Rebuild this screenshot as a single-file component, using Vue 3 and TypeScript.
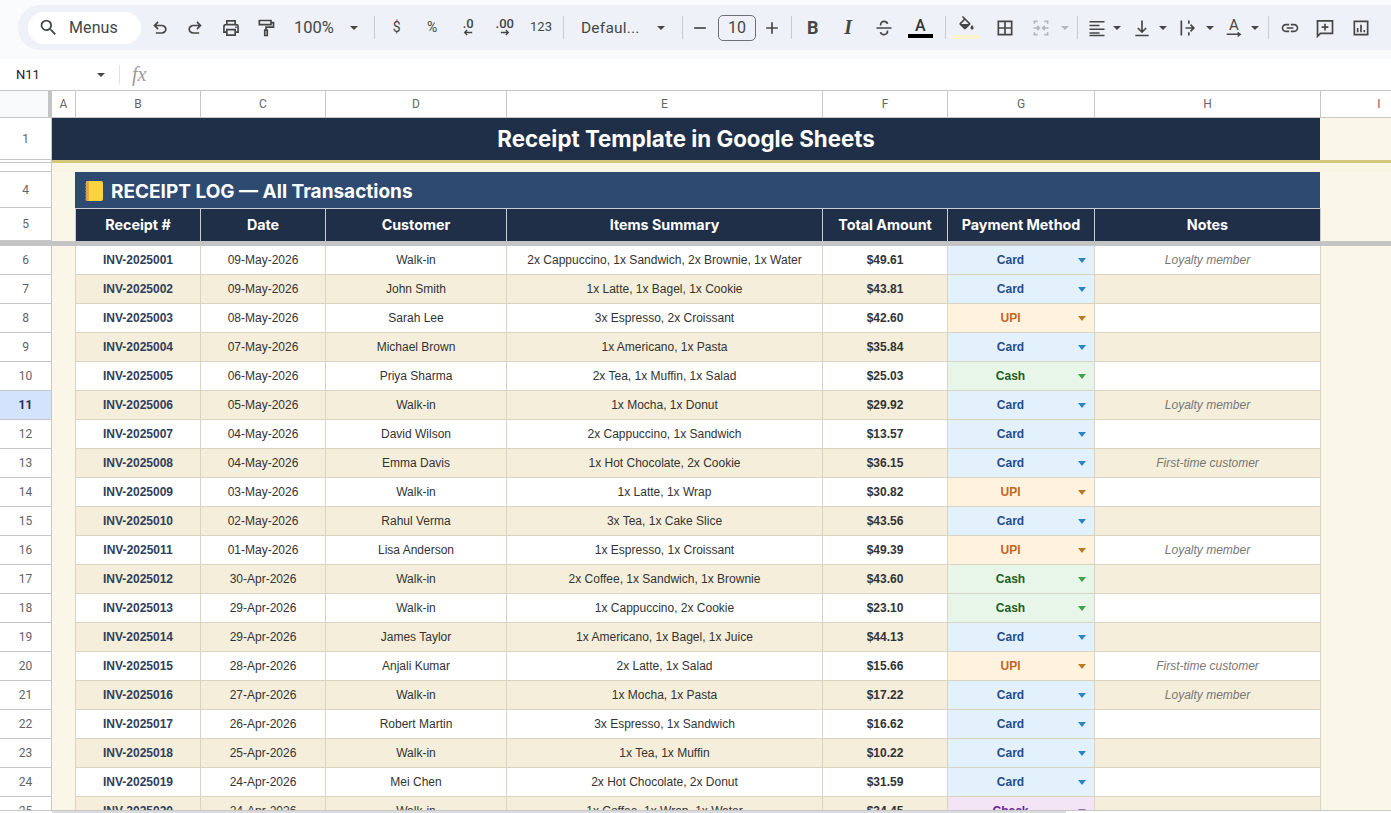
<script setup lang="ts">
type Row = {
  num: number;
  id: string;
  date: string;
  customer: string;
  items: string;
  total: string;
  method: string;
  notes: string;
};

const columns = ['A', 'B', 'C', 'D', 'E', 'F', 'G', 'H', 'I'];
const headings = ['Receipt #', 'Date', 'Customer', 'Items Summary', 'Total Amount', 'Payment Method', 'Notes'];

const raw: string[][] = [
  ['09-May-2026', 'Walk-in', '2x Cappuccino, 1x Sandwich, 2x Brownie, 1x Water', '$49.61', 'Card', 'Loyalty member'],
  ['09-May-2026', 'John Smith', '1x Latte, 1x Bagel, 1x Cookie', '$43.81', 'Card', ''],
  ['08-May-2026', 'Sarah Lee', '3x Espresso, 2x Croissant', '$42.60', 'UPI', ''],
  ['07-May-2026', 'Michael Brown', '1x Americano, 1x Pasta', '$35.84', 'Card', ''],
  ['06-May-2026', 'Priya Sharma', '2x Tea, 1x Muffin, 1x Salad', '$25.03', 'Cash', ''],
  ['05-May-2026', 'Walk-in', '1x Mocha, 1x Donut', '$29.92', 'Card', 'Loyalty member'],
  ['04-May-2026', 'David Wilson', '2x Cappuccino, 1x Sandwich', '$13.57', 'Card', ''],
  ['04-May-2026', 'Emma Davis', '1x Hot Chocolate, 2x Cookie', '$36.15', 'Card', 'First-time customer'],
  ['03-May-2026', 'Walk-in', '1x Latte, 1x Wrap', '$30.82', 'UPI', ''],
  ['02-May-2026', 'Rahul Verma', '3x Tea, 1x Cake Slice', '$43.56', 'Card', ''],
  ['01-May-2026', 'Lisa Anderson', '1x Espresso, 1x Croissant', '$49.39', 'UPI', 'Loyalty member'],
  ['30-Apr-2026', 'Walk-in', '2x Coffee, 1x Sandwich, 1x Brownie', '$43.60', 'Cash', ''],
  ['29-Apr-2026', 'Walk-in', '1x Cappuccino, 2x Cookie', '$23.10', 'Cash', ''],
  ['29-Apr-2026', 'James Taylor', '1x Americano, 1x Bagel, 1x Juice', '$44.13', 'Card', ''],
  ['28-Apr-2026', 'Anjali Kumar', '2x Latte, 1x Salad', '$15.66', 'UPI', 'First-time customer'],
  ['27-Apr-2026', 'Walk-in', '1x Mocha, 1x Pasta', '$17.22', 'Card', 'Loyalty member'],
  ['26-Apr-2026', 'Robert Martin', '3x Espresso, 1x Sandwich', '$16.62', 'Card', ''],
  ['25-Apr-2026', 'Walk-in', '1x Tea, 1x Muffin', '$10.22', 'Card', ''],
  ['24-Apr-2026', 'Mei Chen', '2x Hot Chocolate, 2x Donut', '$31.59', 'Card', ''],
  ['24-Apr-2026', 'Walk-in', '1x Coffee, 1x Wrap, 1x Water', '$34.45', 'Check', ''],
];

const rows: Row[] = raw.map((r, i) => ({
  num: i + 6,
  id: 'INV-2025' + String(i + 1).padStart(3, '0'),
  date: r[0],
  customer: r[1],
  items: r[2],
  total: r[3],
  method: r[4],
  notes: r[5],
}));
</script>

<template>
  <div class="page">
    <div class="top">
      <div class="toolbar">
        <div class="menus">
          <svg class="ic" viewBox="0 0 24 24"><path d="M15.5 14h-.79l-.28-.27A6.47 6.47 0 0 0 16 9.5 6.5 6.5 0 1 0 9.5 16c1.61 0 3.09-.59 4.23-1.57l.27.28v.79l5 4.99L20.49 19l-4.99-5zm-6 0C7.01 14 5 11.99 5 9.5S7.01 5 9.5 5 14 7.01 14 9.5 11.99 14 9.5 14z" /></svg>
          <span>Menus</span>
        </div>
        <div class="b first"><svg class="ic" viewBox="0 0 24 24"><path d="M7 19v-2h7.1q1.6 0 2.7-1t1.2-2.5q0-1.500-1.200-2.500T14.100 10H7.800l2.600 2.600L9 14 4 9l5-5 1.400 1.400L7.800 8h6.300q2.400 0 4.200 1.600T20 13.500q0 2.300-1.700 3.900T14.100 19H7z" /></svg></div>
        <div class="b"><svg class="ic flip" viewBox="0 0 24 24"><path d="M7 19v-2h7.1q1.6 0 2.7-1t1.2-2.5q0-1.500-1.200-2.500T14.100 10H7.800l2.600 2.600L9 14 4 9l5-5 1.400 1.400L7.800 8h6.300q2.400 0 4.200 1.600T20 13.500q0 2.300-1.700 3.900T14.100 19H7z" /></svg></div>
        <div class="b"><svg class="ic line" viewBox="0 0 24 24"><path d="M7 8V3.500h10V8M7 17H3.500v-6.500A2.500 2.500 0 0 1 6 8h12a2.500 2.500 0 0 1 2.500 2.500V17H17M7 14h10v6.500H7z" /><circle class="dot" cx="18" cy="11" r="1" /></svg></div>
        <div class="b"><svg class="ic line" viewBox="0 0 24 24"><path d="M4 3h14v5H4zM18 5.500h3V11h-9v3.500M10.500 14.500h3V21h-3z" /></svg></div>
        <div class="zoom-val">100%</div>
        <i class="caret" />
        <div class="sep s-zoom" />
        <div class="b txt">$</div>
        <div class="b txt">%</div>
        <div class="b dec">
          <span>.0</span>
          <svg class="dec-arrow" viewBox="0 0 12 8"><path d="M11 4H2M5 1 2 4l3 3" /></svg>
        </div>
        <div class="b dec">
          <span>.00</span>
          <svg class="dec-arrow" viewBox="0 0 12 8"><path d="M1 4h9M7 1l3 3-3 3" /></svg>
        </div>
        <div class="b txt small">123</div>
        <div class="sep s-4" />
        <div class="font-val">Defaul...</div>
        <i class="caret" />
        <div class="sep s-font" />
        <div class="pm"><svg class="ic" viewBox="0 0 24 24"><path d="M5 11h14v2H5z" /></svg></div>
        <div class="size">10</div>
        <div class="pm wide"><svg class="ic" viewBox="0 0 24 24"><path d="M19 13h-6v6h-2v-6H5v-2h6V5h2v6h6z" /></svg></div>
        <div class="sep s-plus" />
        <div class="b fmt bold">B</div>
        <div class="b fmt ital">I</div>
        <div class="b"><svg class="ic line" viewBox="0 0 24 24"><path d="M3 12h18M8 9c-.5-3 1.500-5 4-5s3.800 1.200 4.200 3M16.200 15c.4 3-1.500 5-4.200 5s-3.800-1.200-4.200-3" /></svg></div>
        <div class="b color-a"><span>A</span><b /></div>
        <div class="sep s-5" />
        <div class="b fill">
          <svg class="ic" viewBox="0 0 24 24"><path d="M16.560 8.940 7.620 0 6.210 1.410l2.380 2.380-5.150 5.150c-.59.59-.59 1.540 0 2.120l5.500 5.500c.29.29.68.44 1.060.44s.77-.15 1.060-.44l5.500-5.500c.59-.58.59-1.530 0-2.120zM5.210 10 10 5.210 14.790 10H5.210zM19 11.500s-2 2.170-2 3.500c0 1.100.9 2 2 2s2-.9 2-2c0-1.330-2-3.500-2-3.500z" /></svg>
          <b />
        </div>
        <div class="b gap3"><svg class="ic line" viewBox="0 0 24 24"><path d="M4 4h16v16H4zM12 4v16M4 12h16" /></svg></div>
        <div class="b merge"><svg class="ic line muted" viewBox="0 0 24 24"><path d="M8 4H4v3M4 17v3h4M16 4h4v3M20 17v3h-4M3 12h7M7.500 9.500 10 12l-2.500 2.500M21 12h-7M16.500 9.500 14 12l2.500 2.500" /></svg></div>
        <i class="caret off" />
        <div class="sep s-6" />
        <div class="n a5"><svg class="ic line" viewBox="0 0 24 24"><path d="M3 4.500h18M3 9h12M3 13.500h18M3 18h12M3 21h18" /></svg></div>
        <i class="caret" />
        <div class="n a5"><svg class="ic line" viewBox="0 0 24 24"><path d="M4 21h16M12 3v14M7 12l5 5 5-5" /></svg></div>
        <i class="caret a1" />
        <div class="n a5"><svg class="ic line" viewBox="0 0 24 24"><path d="M4 3v18M9 12h10M15 8l4 4-4 4M13 3v4M13 17v4" /></svg></div>
        <i class="caret a2" />
        <div class="n a4 rotate">
          <span>A</span>
          <svg class="rotate-arrow" viewBox="0 0 22 8"><path d="M1 3h18M16 0.500 19.500 3 16 6" /></svg>
        </div>
        <i class="caret a1" />
        <div class="sep s-8" />
        <div class="b"><svg class="ic" viewBox="0 0 24 24"><path d="M3.900 12c0-1.710 1.390-3.100 3.100-3.100h4V7H7c-2.760 0-5 2.240-5 5s2.240 5 5 5h4v-1.900H7c-1.710 0-3.100-1.390-3.100-3.100zM8 13h8v-2H8v2zm9-6h-4v1.900h4c1.710 0 3.100 1.390 3.100 3.100s-1.390 3.100-3.100 3.100h-4V17h4c2.760 0 5-2.240 5-5s-2.240-5-5-5z" /></svg></div>
        <div class="b"><svg class="ic line" viewBox="0 0 24 24"><path d="M3 3.500h18v15H6.500L3 22zM12 7v8M8 11h8" /></svg></div>
        <div class="b"><svg class="ic line" viewBox="0 0 24 24"><path d="M4 4h16v16H4zM8 12v5M12 8v9M16 14.500V17" /></svg></div>
      </div>
    </div>

    <div class="formula">
      <span class="cell-ref">N11</span>
      <i class="caret ref-caret" />
      <div class="f-sep" />
      <span class="fx">fx</span>
    </div>

    <div class="col-heads grid">
      <div class="corner"><b /></div>
      <div v-for="c in columns" :key="c" class="col-head">{{ c }}</div>
    </div>

    <div class="sheet">
      <div class="grid r1">
        <div class="rh">1</div>
        <div class="title">Receipt Template in Google Sheets</div>
        <div />
      </div>
      <div class="grid r2">
        <div class="rh" />
        <div class="gold" />
      </div>
      <div class="grid r3">
        <div class="rh clip"><span>3</span></div>
        <div />
      </div>
      <div class="grid r4">
        <div class="rh">4</div>
        <div />
        <div class="section">
          <svg class="notebook" viewBox="0 0 20 22">
            <rect x="2" y="1" width="17" height="20" rx="2" fill="#fbd341" />
            <rect x="2" y="1" width="3" height="20" rx="1" fill="#e8a93a" />
            <path d="M1 4h3M1 7h3M1 10h3M1 13h3M1 16h3M1 19h3" stroke="#a9a17f" stroke-width="1" />
          </svg>
          <span>RECEIPT LOG — All Transactions</span>
        </div>
        <div />
      </div>
      <div class="grid r5">
        <div class="rh">5</div>
        <div />
        <div v-for="h in headings" :key="h" class="th">{{ h }}</div>
        <div />
      </div>
      <div class="freeze" />
      <div v-for="row in rows" :key="row.id" class="grid dr" :class="{ alt: row.num % 2 === 1 }">
        <div class="rh" :class="{ selected: row.num === 11 }">{{ row.num }}</div>
        <div class="col-a" />
        <div class="td strong">{{ row.id }}</div>
        <div class="td">{{ row.date }}</div>
        <div class="td">{{ row.customer }}</div>
        <div class="td">{{ row.items }}</div>
        <div class="td strong dark">{{ row.total }}</div>
        <div class="td pay" :class="row.method.toLowerCase()">
          <span>{{ row.method }}</span>
          <i class="chip-arrow" />
        </div>
        <div class="td note">{{ row.notes }}</div>
        <div />
      </div>
    </div>

    <div class="bottom"><b /></div>
  </div>
</template>

<style>
html,
body {
  margin: 0;
  background: #fff;
}
</style>

<style scoped>
.page {
  width: 1391px;
  height: 813px;
  display: flex;
  flex-direction: column;
  overflow: hidden;
  font-family: "Liberation Sans", Arial, sans-serif;
  background: #fff;
}

/* toolbar */
.top {
  height: 59px;
  padding: 5px 0 9px 18px;
  box-sizing: border-box;
  background: #f9fbfd;
  flex: none;
}
.toolbar {
  height: 45px;
  display: flex;
  align-items: center;
  padding-left: 10px;
  background: #eef1f7;
  border-radius: 22px 0 0 22px;
  color: #444746;
  font-family: Roboto, sans-serif;
}
.menus {
  width: 113px;
  height: 32px;
  flex: none;
  box-sizing: border-box;
  padding-left: 10px;
  background: #fff;
  border-radius: 16px;
  display: flex;
  align-items: center;
  gap: 10px;
  font-size: 16px;
  letter-spacing: 0.1px;
}
.menus .ic {
  width: 21px;
  height: 21px;
}
.ic {
  width: 20px;
  height: 20px;
  fill: #444746;
  flex: none;
}
.ic.flip {
  transform: scaleX(-1);
}
.ic.line {
  fill: none;
  stroke: #444746;
  stroke-width: 2;
}
.ic.line .dot {
  fill: #444746;
  stroke: none;
}
.ic.muted {
  stroke: #b4b8bd;
}
.b {
  width: 35.5px;
  height: 32px;
  flex: none;
  display: flex;
  align-items: center;
  justify-content: center;
}
.b.first {
  margin-left: 1px;
}
.b.gap3 {
  margin-left: 3px;
}
.b.merge {
  margin-left: 1px;
}
.n {
  width: 28px;
  height: 32px;
  flex: none;
  display: flex;
  align-items: center;
  justify-content: center;
}
.a5 {
  margin-left: 5px;
}
.a4 {
  margin-left: 4px;
}
.zoom-val {
  width: 54px;
  padding-left: 10px;
  font-size: 16.5px;
  flex: none;
}
.caret {
  width: 0;
  height: 0;
  margin: 0 2px;
  flex: none;
  border-left: 4px solid transparent;
  border-right: 4px solid transparent;
  border-top: 4px solid #444746;
}
.caret.off {
  border-top-color: #b4b8bd;
}
.caret.a1 {
  margin-left: 3px;
}
.caret.a2 {
  margin-left: 4px;
}
.sep {
  width: 1px;
  height: 23px;
  flex: none;
  background: #c7cbd1;
}
.s-zoom {
  margin: 0 4px 0 14px;
}
.s-4 {
  margin: 0 17px 0 4px;
}
.s-font {
  margin-left: 15px;
}
.s-plus {
  margin: 0 3px;
}
.s-5 {
  margin: 0 3px 0 6.5px;
}
.s-6 {
  margin-left: 6px;
}
.s-8 {
  margin: 0 3px 0 7px;
}
.txt {
  font-size: 14px;
  padding-bottom: 2px;
  box-sizing: border-box;
}
.txt.small {
  width: 36px;
  font-size: 13px;
}
.dec {
  width: 36.5px;
  flex-direction: column;
  font-size: 13px;
  font-weight: 500;
  line-height: 11px;
  padding-bottom: 2px;
  box-sizing: border-box;
}
.dec-arrow {
  width: 10px;
  height: 7px;
  fill: none;
  stroke: #444746;
  stroke-width: 1.600;
}
.font-val {
  width: 74px;
  flex: none;
  font-size: 15.500px;
  letter-spacing: 0.2px;
}
.pm {
  width: 34px;
  flex: none;
  display: flex;
  justify-content: center;
}
.pm.wide {
  width: 32px;
}
.size {
  width: 38px;
  height: 26px;
  margin-left: 1px;
  flex: none;
  box-sizing: border-box;
  border: 1px solid #6d7175;
  border-radius: 5px;
  font-size: 16px;
  line-height: 24px;
  text-align: center;
}
.fmt {
  font-size: 18px;
  font-weight: 700;
}
.ital {
  font-family: "Liberation Serif", serif;
  font-style: italic;
  font-size: 20px;
}
.color-a {
  margin-left: 1px;
  flex-direction: column;
  font-size: 16px;
  font-weight: 500;
  line-height: 16px;
  color: #333;
}
.color-a b {
  width: 25px;
  height: 4px;
  background: #000;
}
.fill {
  flex-direction: column;
}
.fill .ic {
  width: 19px;
  height: 19px;
}
.fill b {
  width: 26px;
  height: 4px;
  background: #faf3cf;
}
.rotate {
  flex-direction: column;
  font-size: 15px;
  line-height: 14px;
}
.rotate-arrow {
  width: 16px;
  height: 6px;
  fill: none;
  stroke: #444746;
  stroke-width: 2;
}

/* formula bar */
.formula {
  height: 31px;
  flex: none;
  display: flex;
  align-items: center;
  box-sizing: border-box;
  padding-left: 16px;
  font-family: Roboto, sans-serif;
  background: #fff;
}
.cell-ref {
  width: 81px;
  font-size: 13px;
  color: #222;
}
.ref-caret {
  margin: 0 14px 0 0;
}
.f-sep {
  width: 1px;
  height: 19px;
  margin-right: 12px;
  background: #e0e2e5;
}
.fx {
  font-family: "Liberation Serif", serif;
  font-style: italic;
  font-size: 20px;
  color: #9a9a9a;
}

/* grid */
.grid {
  display: grid;
  grid-template-columns: 52px 24px 125px 125px 181px 316px 125px 147px 226px 1fr;
  flex: none;
}
.col-heads {
  height: 28px;
  box-sizing: border-box;
  border-top: 1px solid #c7c7c7;
  border-bottom: 1px solid #c7c7c7;
  background: #fff;
}
.corner {
  background: #f8f9fa;
  display: flex;
  justify-content: flex-end;
}
.corner b {
  width: 4px;
  background: #c4c4c4;
}
.col-head {
  border-right: 1px solid #c7c7c7;
  font-family: Roboto, sans-serif;
  font-size: 12px;
  line-height: 26px;
  text-align: center;
  color: #666;
}
.col-head:last-child {
  border-right: 0;
  padding-left: 46px;
}
.sheet {
  flex: 1;
  min-height: 0;
  overflow: hidden;
  background: #faf6e8;
}
.rh {
  box-sizing: border-box;
  background: #fff;
  border-right: 1px solid #c7c7c7;
  border-bottom: 1px solid #c7c7c7;
  display: flex;
  align-items: center;
  justify-content: center;
  font-family: Roboto, sans-serif;
  font-size: 12px;
  color: #5f6368;
}
.rh.selected {
  background: #d3e3fd;
  font-weight: 700;
  color: #1f3250;
}
.rh.clip {
  overflow: hidden;
  align-items: flex-start;
}
.rh.clip span {
  padding-top: 6px;
}
.r1 {
  height: 42px;
}
.title {
  grid-column: 2 / 10;
  margin-right: 1px;
  background: #1f2f47;
  color: #fff;
  font-family: Inter, sans-serif;
  font-size: 22.300px;
  font-weight: 700;
  line-height: 42px;
  text-align: center;
}
.r2 {
  height: 3px;
}
.gold {
  grid-column: 2 / 11;
  background: #d2c879;
}
.r3 {
  height: 9px;
  background: #f8f5e4;
}
.r4 {
  height: 36px;
}
.section {
  grid-column: 3 / 10;
  margin: 0 1px 0 -1px;
  background: #2e4a70;
  color: #fff;
  display: flex;
  align-items: center;
  gap: 7px;
  padding: 2px 0 0 9px;
  box-sizing: border-box;
  font-family: Inter, sans-serif;
  font-size: 19px;
  font-weight: 700;
}
.notebook {
  width: 20px;
  height: 22px;
  flex: none;
}
.r5 {
  height: 33px;
}
.th {
  box-sizing: border-box;
  background: #1f2f47;
  border-top: 1px solid #c9ced6;
  border-right: 1px solid #c9ced6;
  color: #fff;
  font-family: Inter, sans-serif;
  font-size: 14.300px;
  font-weight: 700;
  line-height: 32px;
  text-align: center;
}
.th:nth-child(3) {
  margin-left: -1px;
  border-left: 1px solid #c9ced6;
}
.freeze {
  height: 5px;
  background: #c4c4c4;
}
.dr {
  height: 29px;
}
.col-a {
  border-right: 1px solid #d9d3c1;
}
.td {
  box-sizing: border-box;
  background: #fff;
  border-right: 1px solid #d9d3c1;
  border-bottom: 1px solid #d9d3c1;
  font-size: 12px;
  line-height: 28px;
  text-align: center;
  color: #333;
  white-space: nowrap;
  overflow: hidden;
}
.alt .td {
  background: #f4eeda;
}
.strong {
  font-weight: 700;
  color: #2e3f5c;
}
.strong.dark {
  color: #333;
}
.note {
  font-style: italic;
  color: #777;
}
.pay {
  display: flex;
  align-items: center;
  padding-right: 8px;
  font-weight: 700;
}
.pay span {
  flex: 1;
  text-align: center;
}
.chip-arrow {
  width: 0;
  height: 0;
  margin-left: 5px;
  border-left: 4.500px solid transparent;
  border-right: 4.500px solid transparent;
  border-top: 5px solid currentColor;
}
.alt .pay.card,
.pay.card {
  background: #e3f1fc;
  color: #1f4e8c;
}
.pay.card .chip-arrow {
  border-top-color: #2a84c6;
}
.alt .pay.upi,
.pay.upi {
  background: #fff3e0;
  color: #c8641e;
}
.pay.upi .chip-arrow {
  border-top-color: #b87c20;
}
.alt .pay.cash,
.pay.cash {
  background: #e8f5e9;
  color: #1b5e20;
}
.pay.cash .chip-arrow {
  border-top-color: #43a047;
}
.alt .pay.check,
.pay.check {
  background: #f3e5f5;
  color: #6a1b9a;
}
.pay.check .chip-arrow {
  border-top-color: #9c6fb0;
}

.bottom {
  height: 3px;
  flex: none;
  box-sizing: border-box;
  padding-left: 52px;
  border-top: 1px solid #c7c7c7;
  background: #fff;
}
.bottom b {
  display: block;
  width: 1014px;
  height: 2px;
  background: #dadce0;
}
</style>
